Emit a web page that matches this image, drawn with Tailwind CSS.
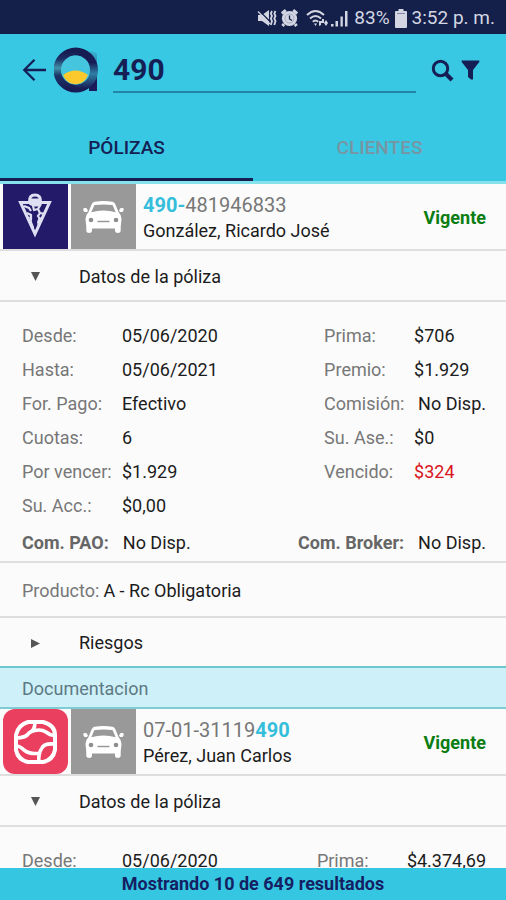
<!DOCTYPE html>
<html lang="es">
<head>
<meta charset="utf-8">
<meta name="viewport" content="width=device-width, initial-scale=1">
<title>Pólizas</title>
<script src="https://cdn.jsdelivr.net/npm/@tailwindcss/browser@4"></script>
</head>
<body class="flex h-screen flex-col overflow-hidden bg-[#fbfbfb] font-[Roboto,sans-serif] text-[18px] leading-6 text-[#1c1c1c]">
<svg class="hidden" aria-hidden="true">
  <symbol id="car" viewBox="0 0 41 32">
    <path fill="#fff" fill-rule="evenodd" d="M11.500.8Q20.500-.6 29.500.8Q31.300 1.200 32.200 3L35.500 11Q38.500 14 38.500 18L37.700 26V30Q37.500 32 34.800 32Q32.300 32 32 30V27.500H9V30Q8.700 32 6.200 32Q3.500 32 3.300 30V26L2.500 18Q2.500 14 5.500 11L8.800 3Q9.700 1.200 11.500.8ZM12 4Q11.300 4.200 11 5L8.300 11.300Q20.500 7.800 32.700 11.300L30 5Q29.700 4.200 29 4Q20.500 2.800 12 4Z"/>
    <path fill="#fff" d="M.3 8Q.5 7 1.500 7H3.300L5 9.500 4 11H1.500Q.1 10 .3 8ZM40.700 8Q40.500 7 39.500 7H37.700L36 9.500 37 11H39.500Q40.900 10 40.700 8Z"/>
    <circle cx="8" cy="19" r="2.300" fill="#8e8e8e"/><circle cx="33" cy="19" r="2.300" fill="#8e8e8e"/>
    <path d="M14.500 20.500h12" stroke="#999" stroke-width="1.500"/>
  </symbol>
</svg>

<div class="flex h-[34px] shrink-0 items-center justify-end bg-[#14204a] pt-[2px] pr-[11px] text-[19px] text-[#d3d6e2]">
  <svg class="mr-1 h-[18px] w-5" viewBox="0 0 20 18" fill="none" stroke="currentColor" stroke-width="1.800">
    <path fill="currentColor" stroke="none" d="M1 6h4l7-5v16l-7-5H1z"/><path stroke="#14204a" stroke-width="1.200" d="M2 1.500l11 11"/><path d="M1 2.500l12 12.500" stroke-width="1.300"/><path d="M15 2l-1.200 2.500L15 7l-1.200 2.500L15 12l-1.200 4M18.500 2l-1.200 2.500L18.500 7l-1.200 2.500L18.500 12l-1.200 4"/>
  </svg>
  <svg class="mr-2 h-[18px] w-[17px]" viewBox="0 0 17 18">
    <path stroke="currentColor" stroke-width="3" d="M.8 4.500L4.800 1.200M16.200 4.500l-4-3.300M3 15l-1.500 2M14 15l1.500 2"/><circle cx="8.500" cy="9.500" r="7.600" fill="currentColor"/><circle cx="8.500" cy="9.500" r="4.500" fill="none" stroke="#a3a9c0"/><path d="M8.500 6.500v3.500l2.500 1.500" fill="none" stroke="#14204a" stroke-width="1.300"/>
  </svg>
  <svg class="mr-[3px] h-[18px] w-[22px]" viewBox="0 0 22 18" fill="none" stroke="currentColor" stroke-width="2">
    <path d="M1 6Q9.500-2 18 6M4 9.500q5.500-5 11 0M6.800 12.700q2.700-2.500 5.400 0"/><path fill="currentColor" stroke="none" d="M8 14.500h3L9.500 17zM13 12h3v-2l2 0v4h-3v2l-2 1zM18 14l2-3 2 3-2 3z"/>
  </svg>
  <svg class="mr-[6px] h-[18px] w-[17px]" viewBox="0 0 17 18" fill="currentColor">
    <path d="M0 15h2.500v2.500H0zM4.500 12H7v5.500H4.500zM9.500 7.500h2.300v10H9.500zM14 2h2.500v15.500H14z"/>
  </svg>
  <span>83%</span>
  <svg class="mr-[5px] ml-[5px] h-[19px] w-[12px]" viewBox="0 0 12 19" fill="currentColor"><path d="M3.500 0h5v2H11q1 0 1 1v15q0 1-1 1H1q-1 0-1-1V3q0-1 1-1h2.500z"/><path d="M2 4.500h8" stroke="#7f87a5"/></svg>
  <span>3:52 p. m.</span>
</div>

<header class="shrink-0 border-b-3 border-[#86e2ea] bg-[#38c8e3] text-[#151f55]">
  <div class="flex h-[76px] items-center pr-[26px] pb-1 pl-[22px]">
    <button type="button" aria-label="Volver" class="mr-2">
      <svg class="h-6 w-6" viewBox="0 0 24 24" fill="none" stroke="currentColor" stroke-width="2.300"><path d="M24 12H2.500M12.500 1.800L2.300 12l10.200 10.200"/></svg>
    </button>
    <svg class="mr-[14px] h-[46px] w-[45px] shrink-0" viewBox="0 0 45 46" role="img" aria-label="Logo">
      <defs>
        <linearGradient id="stem" x1="0" y1="0" x2="0" y2="1"><stop offset="0" stop-color="#38b4d2"/><stop offset=".4" stop-color="#2d7fa8"/><stop offset=".75" stop-color="#1a1b58"/></linearGradient>
        <linearGradient id="ringL" x1="0" y1="0" x2="0" y2="1"><stop offset="0" stop-color="#161c50"/><stop offset=".2" stop-color="#1d2f64"/><stop offset=".45" stop-color="#4093ab"/><stop offset=".65" stop-color="#1c3467"/><stop offset="1" stop-color="#171c55"/></linearGradient>
        <linearGradient id="ringR" x1="0" y1="0" x2="0" y2="1"><stop offset="0" stop-color="#161c50"/><stop offset=".3" stop-color="#171c55"/><stop offset=".6" stop-color="#2f7fa4"/><stop offset="1" stop-color="#171c55"/></linearGradient>
      </defs>
      <path d="M35 4q6 0 8 3v37h-8z" fill="url(#stem)"/>
      <path d="M22 4.500a18.500 18.500 0 0 0 0 37" fill="none" stroke="url(#ringL)" stroke-width="8"/>
      <path d="M21.500 4.500a18.500 18.500 0 0 1 0 37" fill="none" stroke="url(#ringR)" stroke-width="8"/>
      <circle cx="21.500" cy="23" r="14.500" fill="#45c6de"/>
      <path d="M9 28q12.500-9 25 0-3.500 9-12.500 9.200-9-.2-12.500-9.200z" fill="#fcc92c"/>
    </svg>
    <input type="text" aria-label="Buscar" value="490" class="h-[46px] min-w-0 flex-1 border-b-2 border-[#2585a6] bg-transparent text-[30px] font-bold outline-none">
    <button type="button" aria-label="Buscar" class="ml-[15px]">
      <svg class="h-[23px] w-[23px]" viewBox="0 0 23 23" fill="none" stroke="currentColor"><circle cx="9.500" cy="9.500" r="7.200" stroke-width="3"/><path d="M14.500 14.500l6.500 6.500" stroke-width="4.200"/></svg>
    </button>
    <button type="button" aria-label="Filtrar" class="ml-[7px]">
      <svg class="h-5 w-[19px]" viewBox="0 0 19 20" fill="currentColor"><path d="M.5.500h18q0 1.500-1 2.500L12 10v9.500h-2L7 17v-7L1.500 3Q.5 2 .5.500z"/></svg>
    </button>
  </div>
  <nav class="grid grid-cols-2 text-center text-[19px] font-medium">
    <a href="#polizas" class="flex h-[71px] items-center justify-center border-b-3 border-[#151f50] pt-2" aria-current="page">PÓLIZAS</a>
    <a href="#clientes" class="flex h-[71px] items-center justify-center border-b-3 border-transparent pt-2 text-[#7895a3]">CLIENTES</a>
  </nav>
</header>

<main class="min-h-0 flex-1 overflow-hidden">
  <article>
    <div class="flex h-[67px] items-center border-b-2 border-[#dedede] pr-5 pl-[3px]">
      <svg class="h-[65px] w-[65px] shrink-0 bg-[#231b69]" viewBox="0 0 65 65" fill="none" stroke="#dedff2" role="img" aria-label="Aseguradora">
        <path d="M17.500 18.500h29L32 50z" stroke-width="3"/><path d="M26.500 18q-.5-7 5.500-7t5.500 7" stroke-width="3"/>
        <path d="M28 14.500h8l3 4-3 4h-6l-4-2z" fill="#dedff2" stroke="none"/>
        <path d="M21 22l5 2 2 3M30 22l1 4 4-1M38 20l-3 5 2 4 5 1M24 29l4 2v5M37 29l-2 3 2 3" stroke-width="2.200"/>
        <path d="M26 33l2.500-1 .5 6 2 5-.5 4zM36 33l3 1-4 9-1-5z" fill="#dedff2" stroke="none"/>
      </svg>
      <div class="ml-[3px] flex h-[65px] w-[65px] shrink-0 items-center justify-center bg-[#999]"><svg class="h-8 w-[41px]" role="img" aria-label="Automóvil"><use href="#car"/></svg></div>
      <div class="ml-[7px] flex-1 pt-[3px] leading-[26px]">
        <p class="text-[20px] text-[#777]"><b class="text-[#35bedb]">490-</b>481946833</p>
        <p>González, Ricardo José</p>
      </div>
      <strong class="pt-[2px] text-[#0b7d12]">Vigente</strong>
    </div>
    <button type="button" aria-expanded="true" class="flex h-[51px] w-full items-center border-b-2 border-[#dedede] pt-[2px] pl-[30px] text-left">
      <svg class="mr-[38px] h-[11px] w-[11px]" viewBox="0 0 11 11" fill="#555"><path d="M1 1h9L5.500 10z"/></svg>Datos de la póliza
    </button>
    <div class="h-[261px] border-b-2 border-[#dedede] px-5 pt-[17px] pl-[22px]">
      <div class="flex justify-between leading-[34px]">
        <dl class="grid grid-cols-[100px_auto] text-[#1c1c1c] [&>dt]:text-[#777]">
          <dt>Desde:</dt><dd>05/06/2020</dd>
          <dt>Hasta:</dt><dd>05/06/2021</dd>
          <dt>For. Pago:</dt><dd>Efectivo</dd>
          <dt>Cuotas:</dt><dd>6</dd>
          <dt>Por vencer:</dt><dd>$1.929</dd>
          <dt>Su. Acc.:</dt><dd>$0,00</dd>
        </dl>
        <dl class="grid grid-cols-[90px_auto] content-start [&>dt]:text-[#777]">
          <dt>Prima:</dt><dd>$706</dd>
          <dt>Premio:</dt><dd>$1.929</dd>
          <dt>Comisión:</dt><dd class="pl-1">No Disp.</dd>
          <dt>Su. Ase.:</dt><dd>$0</dd>
          <dt>Vencido:</dt><dd class="text-[#d9141c]">$324</dd>
        </dl>
      </div>
      <dl class="flex justify-between pt-2 [&_dt]:font-bold [&_dt]:text-[#666]">
        <div class="flex gap-[14px]"><dt>Com. PAO:</dt><dd>No Disp.</dd></div>
        <div class="flex gap-[14px]"><dt>Com. Broker:</dt><dd>No Disp.</dd></div>
      </dl>
    </div>
    <p class="flex h-[55px] items-center gap-1 border-b-2 border-[#dedede] pt-[2px] pl-[22px]"><span class="text-[#777]">Producto:</span>A - Rc Obligatoria</p>
    <button type="button" aria-expanded="false" class="flex h-[50px] w-full items-center border-b-2 border-[#6cc8ce] pt-[2px] pl-[30px] text-left">
      <svg class="mr-[38px] h-[11px] w-[11px]" viewBox="0 0 11 11" fill="#555"><path d="M1 1v9l9-4.500z"/></svg>Riesgos
    </button>
    <a href="#documentacion" class="flex h-[41px] items-center border-b-2 border-[#7fcdd3] bg-[#cdf0f9] pt-[2px] pl-[22px] text-[#5d7983]">Documentacion</a>
  </article>
  <article>
    <div class="flex h-[67px] items-center border-b-2 border-[#dedede] pr-5 pl-[3px]">
      <svg class="h-[65px] w-[65px] shrink-0 rounded-xl bg-[#ea3f5e]" viewBox="0 0 65 65" fill="none" stroke="#fff" stroke-width="4" role="img" aria-label="Aseguradora">
        <path d="M25 13h15Q52 16 52 26v15Q50 51 40 53H25Q15 51 13 41V26Q15 16 25 13z"/>
        <path d="M32 13q0 9-6 11-3 5-13 5M27 23q10-4 16 0 5 4 9 3M52 35q-11-1-13 4-4 5-3 14M13 37q4 0 8 4 6 5 17 3" stroke-width="3.600"/>
      </svg>
      <div class="ml-[3px] flex h-[65px] w-[65px] shrink-0 items-center justify-center bg-[#999]"><svg class="h-8 w-[41px]" role="img" aria-label="Automóvil"><use href="#car"/></svg></div>
      <div class="ml-[7px] flex-1 pt-[3px] leading-[26px]">
        <p class="text-[20px] text-[#777]">07-01-31119<b class="text-[#35bedb]">490</b></p>
        <p>Pérez, Juan Carlos</p>
      </div>
      <strong class="pt-[2px] text-[#0b7d12]">Vigente</strong>
    </div>
    <button type="button" aria-expanded="true" class="flex h-[51px] w-full items-center border-b-2 border-[#dedede] pt-[2px] pl-[30px] text-left">
      <svg class="mr-[38px] h-[11px] w-[11px]" viewBox="0 0 11 11" fill="#555"><path d="M1 1h9L5.500 10z"/></svg>Datos de la póliza
    </button>
    <div class="flex justify-between px-5 pt-[17px] pl-[22px] leading-[34px]">
      <dl class="grid grid-cols-[100px_auto] [&>dt]:text-[#777]"><dt>Desde:</dt><dd>05/06/2020</dd></dl>
      <dl class="grid grid-cols-[90px_auto] [&>dt]:text-[#777]"><dt>Prima:</dt><dd>$4.374,69</dd></dl>
    </div>
  </article>
</main>

<footer class="flex h-8 shrink-0 items-center justify-center bg-[#35c7e2] font-bold text-[#151f63]">Mostrando 10 de 649 resultados</footer>
</body>
</html>
